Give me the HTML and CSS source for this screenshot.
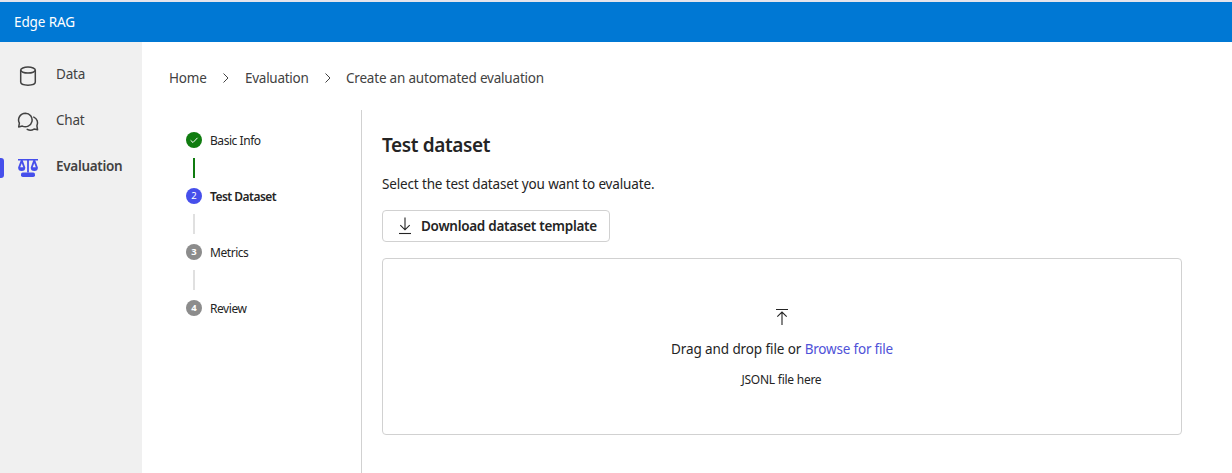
FILE: index.html
```
<!DOCTYPE html>
<html lang="en">
<head>
<meta charset="utf-8">
<title>Edge RAG</title>
<link rel="stylesheet" href="styles.css">
</head>
<body>
<header class="topbar"><span class="brand">Edge RAG</span></header>
<div class="shell">
  <nav class="sidebar">
    <a class="nav-item">
      <svg class="nav-icon" viewBox="0 0 22 22" fill="none" stroke="#424242" stroke-width="1.5"><ellipse cx="11" cy="5.1" rx="7.3" ry="3"/><path d="M3.700 5.100v12c0 1.800 3.200 3.100 7.300 3.100s7.300-1.300 7.300-3.100v-12"/></svg>
      <span class="nav-label nav-data">Data</span>
    </a>
    <a class="nav-item">
      <svg class="nav-icon" viewBox="0 0 22 22" fill="none" stroke="#424242" stroke-width="1.5" stroke-linejoin="round" stroke-linecap="round"><path d="M8.400 2.200a6.800 6.800 0 1 1-3.100 12.900l-3.600.8.7-3.700A6.800 6.800 0 0 1 8.400 2.200z"/><path d="M16.800 6.100a6.500 6.500 0 0 1 3.100 8.800l.7 3.900-3.600-.7a6.800 6.800 0 0 1-6.800.2"/></svg>
      <span class="nav-label nav-chat">Chat</span>
    </a>
    <a class="nav-item nav-active">
      <svg class="nav-icon" viewBox="0 0 22 22" fill="#464feb"><path d="M1 2h20v1.500H1z"/><path d="M10.100 2.500h1.800v13h-1.800z"/><path d="M3.900 3h1.700l2.700 7.500a3.600 3.600 0 0 1-7.200 0zM4.750 6.200 3.200 10.300h3.100zM16.400 3h1.700l2.800 7.500a3.600 3.600 0 0 1-7.200 0zM17.250 6.200 15.700 10.300h3.100z" fill-rule="evenodd"/><rect x="4" y="15.500" width="14" height="4.500" rx="1.800"/></svg>
      <span class="nav-label nav-eval">Evaluation</span>
    </a>
  </nav>
  <main class="main">
    <div class="crumbs">
      <span class="crumb c-home">Home</span>
      <svg class="chev" viewBox="0 0 8 12"><path d="M1.500 1.500 6 6 1.500 10.500"/></svg>
      <span class="crumb c-eval">Evaluation</span>
      <svg class="chev" viewBox="0 0 8 12"><path d="M1.500 1.500 6 6 1.500 10.500"/></svg>
      <span class="crumb c-create">Create an automated evaluation</span>
    </div>
    <div class="wizard">
      <div class="steps">
        <div class="step"><span class="dot done"><svg class="check" viewBox="0 0 16 16"><path d="M4.600 8.300 7 10.500 11.500 5.800"/></svg></span><span class="step-label s-basic">Basic Info</span></div>
        <div class="link link-done"></div>
        <div class="step"><span class="dot current">2</span><span class="step-label s-test">Test Dataset</span></div>
        <div class="link"></div>
        <div class="step"><span class="dot bold">3</span><span class="step-label s-metrics">Metrics</span></div>
        <div class="link"></div>
        <div class="step"><span class="dot bold">4</span><span class="step-label s-review">Review</span></div>
      </div>
      <section class="panel">
        <h1 class="title"><span>Test dataset</span></h1>
        <p class="intro"><span>Select the test dataset you want to evaluate.</span></p>
        <button class="download"><svg class="dl-icon" viewBox="0 0 14 18"><path d="M7 .5v12M2.300 8.100 7 12.800l4.700-4.700"/><path d="M1 16.500h12"/></svg><span class="dl-text">Download dataset template</span></button>
        <div class="dropzone">
          <svg class="up-icon" viewBox="0 0 14 18"><path d="M1 1.500h12M7 17V4M2.300 8.700 7 4l4.700 4.700"/></svg>
          <div class="drag"><span class="drag-text">Drag and drop file or</span><a class="browse">Browse for file</a></div>
          <div class="hint"><span>JSONL file here</span></div>
        </div>
      </section>
    </div>
  </main>
</div>
</body>
</html>
```
FILE: styles.css
```
* { box-sizing: border-box; }
body { margin: 0; width: 1232px; height: 473px; overflow: hidden; background: #fff; color: #242424; font: 13.5px/20px "Noto Sans", "Open Sans", sans-serif; }
span, a { white-space: nowrap; }
.topbar { height: 42px; border-top: 2px solid #e4e4ec; background: #0078d4; background-clip: padding-box; padding: 10px 14px; color: #fff; }
.brand { letter-spacing: -0.1px; }
.shell { display: flex; height: 431px; }
.sidebar { width: 142px; background: #f0f0f0; padding-top: 10px; }
.nav-item { position: relative; display: flex; height: 46px; padding-left: 17px; color: #424242; }
.nav-icon { width: 22px; height: 22px; margin: 13px 17px 0 0; flex: none; }
.nav-label { padding-top: 12px; letter-spacing: -0.2px; }
.nav-active { font-weight: 600; }
.nav-eval { letter-spacing: -0.3px; }
.nav-active::before { content: ""; position: absolute; left: 0; top: 14px; width: 4px; height: 20px; border-radius: 0 3px 3px 0; background: #464feb; }
.main { flex: 1; padding: 26px 0 0 27px; }
.crumbs { display: flex; align-items: center; height: 20px; color: #424242; letter-spacing: -0.2px; }
.crumb { flex: none; }
.chev { width: 8px; height: 12px; fill: none; stroke: #424242; stroke-width: 1; flex: none; }
.c-home { width: 53px; }
.c-eval { width: 79px; margin-left: 15px; letter-spacing: -0.27px; }
.c-create { margin-left: 14px; }
.wizard { display: flex; margin-top: 22px; height: 363px; }
.steps { width: 193px; border-right: 1px solid #d1d1d1; padding: 22px 0 0 17px; }
.step { display: flex; height: 16px; align-items: center; gap: 8px; font-size: 12px; line-height: 16px; letter-spacing: -0.45px; }
.step-label { padding-top: 1px; }
.s-test { font-weight: 600; letter-spacing: -0.52px; }
.dot { width: 16px; height: 16px; border-radius: 50%; background: #8c8c8c; color: #fff; font-size: 9.5px; line-height: 16px; text-align: center; letter-spacing: 0; }
.bold { font-weight: 700; }
.done { background: #107c10; }
.current { background: #464feb; }
.check { display: block; width: 16px; height: 16px; fill: none; stroke: #fff; stroke-width: 1; }
.link { width: 2px; height: 20px; margin: 10px 0 10px 7px; background: #e0e0e0; }
.link-done { background: #107c10; }
.panel { padding: 21px 0 0 20px; width: 820px; }
.title { margin: 0; font-size: 19px; line-height: 28px; font-weight: 600; letter-spacing: -0.38px; }
.intro { margin: 15px 0 16px; letter-spacing: -0.15px; }
.download { display: flex; align-items: center; width: 228px; height: 32px; padding: 0 0 0 15px; border: 1px solid #d1d1d1; border-radius: 4px; background: #fff; color: #242424; font: inherit; font-weight: 600; }
.dl-icon, .up-icon { width: 14px; height: 18px; fill: none; stroke: #242424; stroke-width: 1.1; flex: none; }
.dl-text { margin-left: 9px; letter-spacing: -0.28px; }
.dropzone { display: flex; flex-direction: column; align-items: center; width: 800px; height: 177px; margin-top: 16px; padding-top: 49px; border: 1px solid #d1d1d1; border-radius: 4px; }
.drag { display: flex; width: 222px; margin-top: 13px; letter-spacing: -0.1px; }
.drag-text { width: 134px; }
.browse { color: #4f52d8; letter-spacing: -0.2px; }
.hint { width: 81px; margin-top: 13px; font-size: 12px; line-height: 16px; letter-spacing: -0.25px; }
```
